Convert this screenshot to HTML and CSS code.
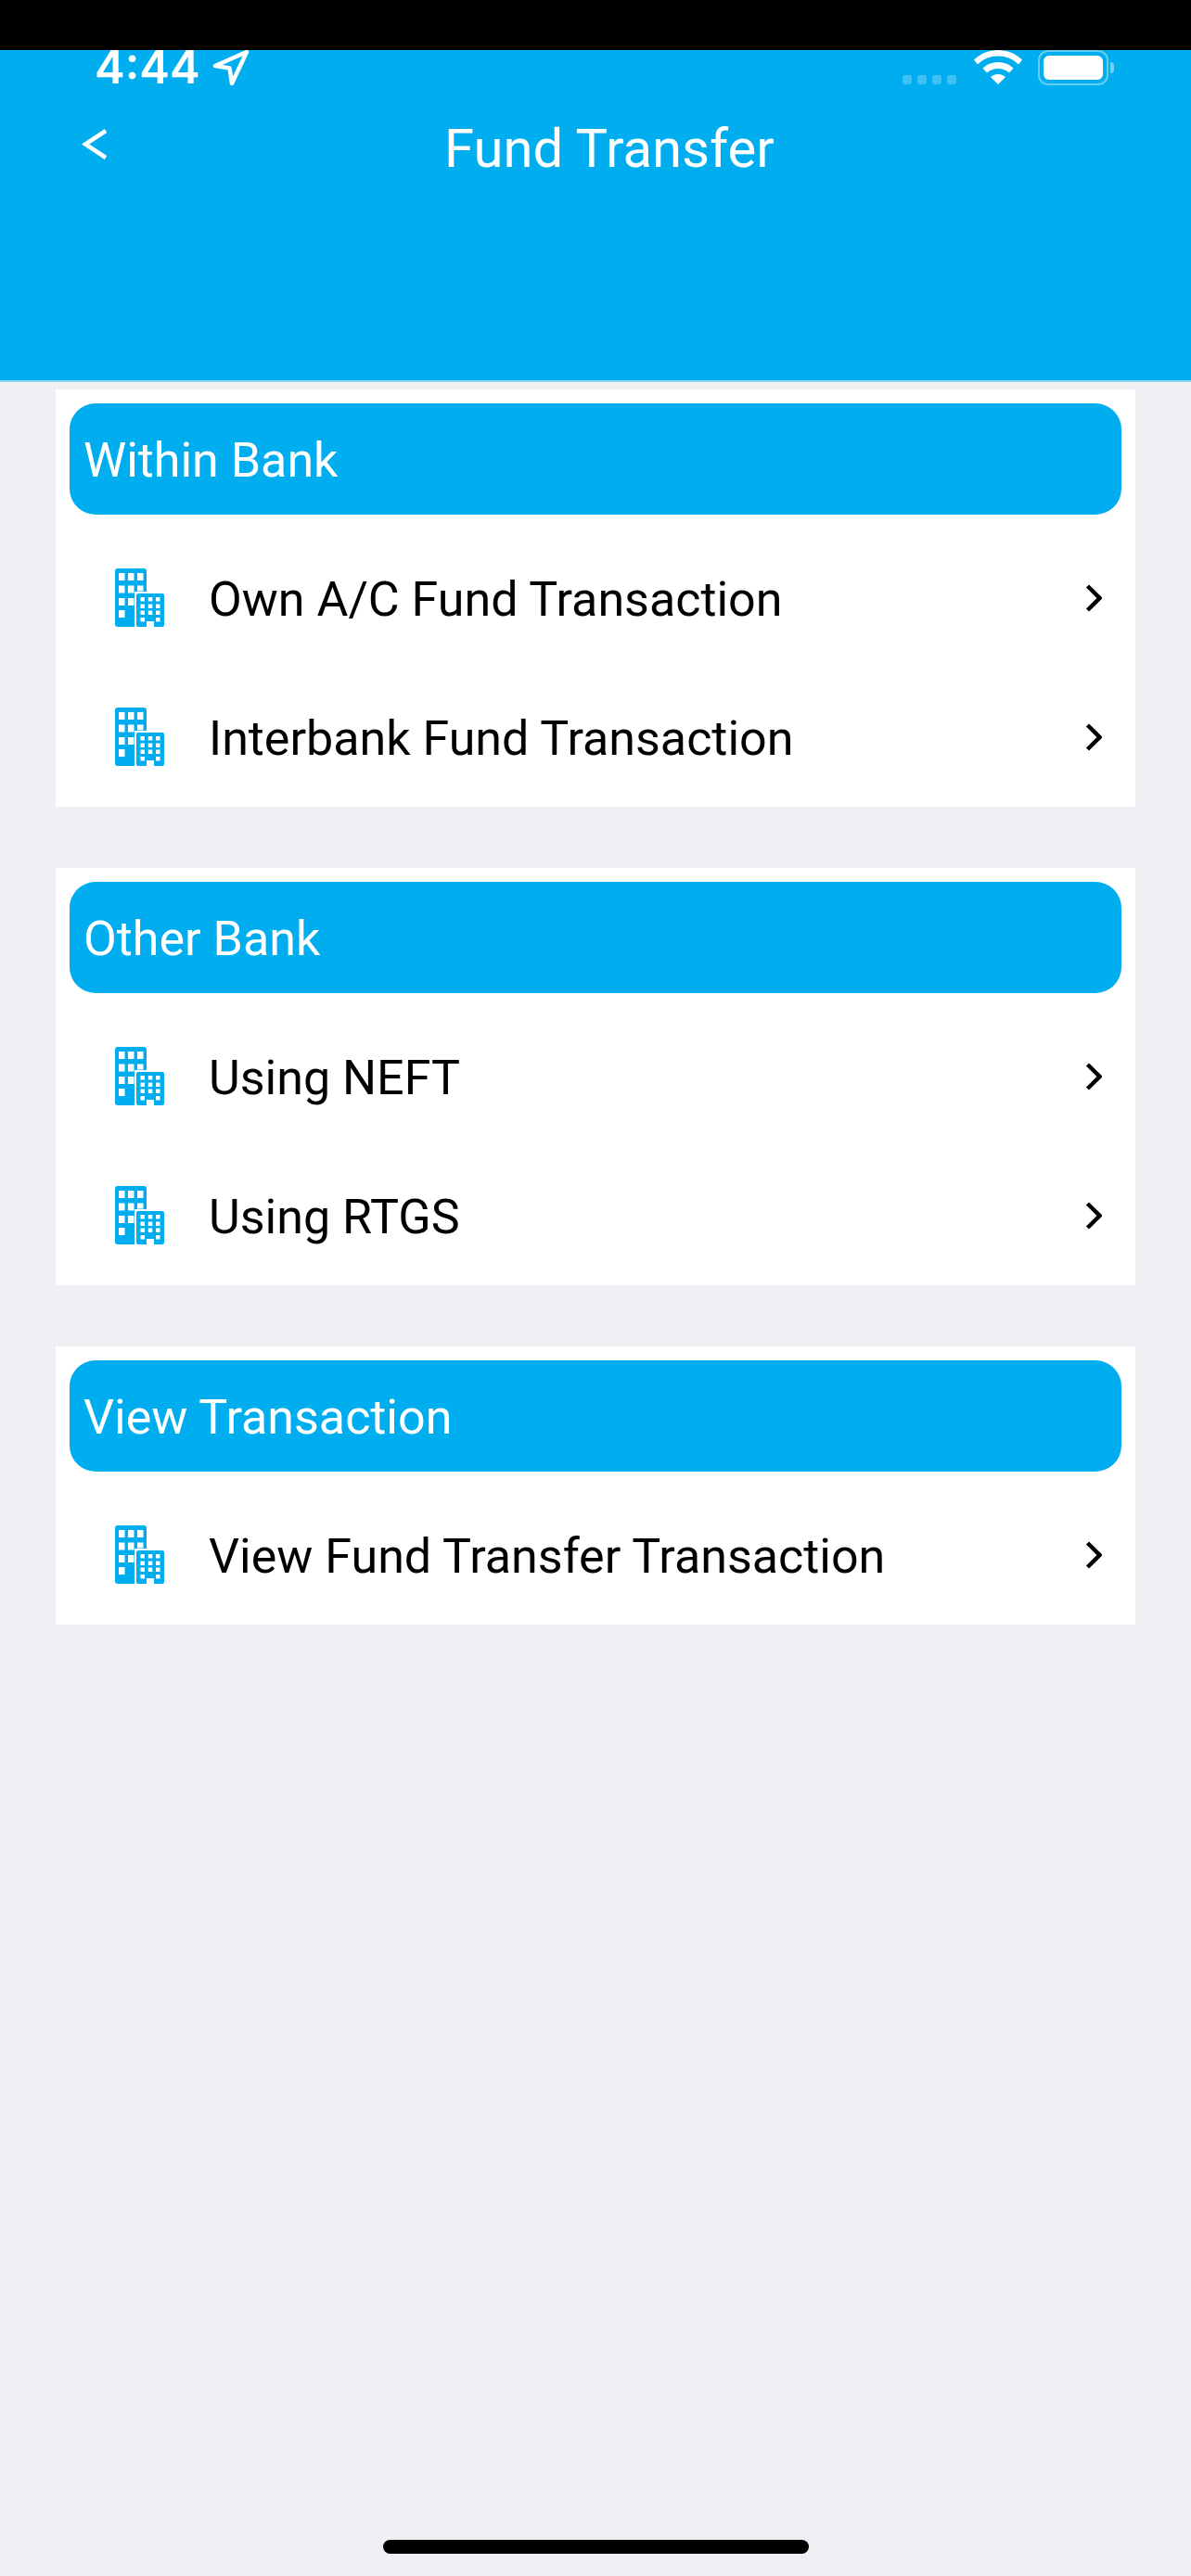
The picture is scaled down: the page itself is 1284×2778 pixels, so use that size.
FILE: index.html
```html
<!DOCTYPE html>
<html lang="en">
<head>
  <meta charset="UTF-8" />
  <meta name="viewport" content="width=device-width, initial-scale=1" />
  <title>Fund Transfer</title>
  <link rel="stylesheet" href="styles.css">
</head>
<body>

  <!-- Shared icons -->
  <svg class="icon-defs" aria-hidden="true">
    <symbol id="building" viewBox="0 0 54 64">
      <path fill="#00aeef" fill-rule="evenodd" d="M3 0h28a3 3 0 0 1 3 3v60H3a3 3 0 0 1-3-3V3a3 3 0 0 1 3-3z
        M4 5v8h6.500V5z M14 5v8h6.500V5z M24 5v8h6.500V5z
        M4 18.500v8h6.500v-8z M14 18.500v8h6.500v-8z M24 18.500v6h6.500v-6z
        M4 32v8h6.500v-8z M14 32v8h6.500v-8z
        M4 45v8h6.500v-8z"/>
      <rect x="21" y="25" width="33" height="39" fill="#fff"/>
      <path fill="#00aeef" fill-rule="evenodd" d="M25 27h26a2 2 0 0 1 2 2v32a2 2 0 0 1-2 2h-9v-6h-8v6h-9a2 2 0 0 1-2-2V29a2 2 0 0 1 2-2z
        M27.500 31v4.500h4.500V31z M35.800 31v4.500h4.500V31z M44 31v4.500h4.500V31z
        M27.500 38.500V43h4.500v-4.500z M35.800 38.500V43h4.500v-4.500z M44 38.500V43h4.500v-4.500z
        M27.500 45.500V50h4.500v-4.500z M35.800 45.500V50h4.500v-4.500z M44 45.500V50h4.500v-4.500z
        M27.500 53v4.500h4.500V53z M44 53v4.500h4.500V53z"/>
    </symbol>
    <symbol id="chevron" viewBox="0 0 19 32">
      <path d="M3.500 3L16.500 16L3.500 29" fill="none" stroke="#000" stroke-width="4.500"/>
    </symbol>
  </svg>

  <div class="notch-bar"></div>

  <header class="top">
    <div class="status">
      <span class="time">4:44</span>
      <svg class="loc" viewBox="0 0 40 38"><path d="M3 17L37 2L21 36L18.500 19.500z" fill="none" stroke="#fff" stroke-width="4.500" stroke-linejoin="round"/></svg>
      <div class="dots"><i></i><i></i><i></i><i></i></div>
      <svg class="wifi" viewBox="0 0 52 37">
        <path fill="#fff" d="M26 0C16 0 7.500 3.500 0 10.500L4 15.500C10 9.500 17.500 6.500 26 6.500S42 9.500 48 15.500L52 10.500C44.500 3.500 36 0 26 0z
          M26 13C20 13 14.500 15 9.500 19.500L14 24.500C17.500 21.500 21.500 20 26 20S34.500 21.500 38 24.500L42.500 19.500C37.500 15 32 13 26 13z
          M26 26C23 26 20.500 27 18 29L26 37L34 29C31.500 27 29 26 26 26z"/>
      </svg>
      <div class="battery"><div class="battery-fill"></div></div>
      <div class="battery-cap"></div>
    </div>
    <div class="nav">
      <svg class="back" viewBox="0 0 28 33"><path d="M26 2L4 16.500L26 31" fill="none" stroke="#fff" stroke-width="4.500"/></svg>
      <h1>Fund Transfer</h1>
    </div>
  </header>

  <main class="content">
    <section class="card">
      <h2>Within Bank</h2>
      <a class="row">
        <svg class="building"><use href="#building"/></svg>
        <span>Own A/C Fund Transaction</span>
        <svg class="chev"><use href="#chevron"/></svg>
      </a>
      <a class="row">
        <svg class="building"><use href="#building"/></svg>
        <span>Interbank Fund Transaction</span>
        <svg class="chev"><use href="#chevron"/></svg>
      </a>
    </section>

    <section class="card">
      <h2>Other Bank</h2>
      <a class="row">
        <svg class="building"><use href="#building"/></svg>
        <span>Using NEFT</span>
        <svg class="chev"><use href="#chevron"/></svg>
      </a>
      <a class="row">
        <svg class="building"><use href="#building"/></svg>
        <span>Using RTGS</span>
        <svg class="chev"><use href="#chevron"/></svg>
      </a>
    </section>

    <section class="card">
      <h2>View Transaction</h2>
      <a class="row">
        <svg class="building"><use href="#building"/></svg>
        <span>View Fund Transfer Transaction</span>
        <svg class="chev"><use href="#chevron"/></svg>
      </a>
    </section>
  </main>

  <div class="home-bar"></div>

</body>
</html>
```

FILE: styles.css
```css
html, body {
  height: 100%;
}

body {
  margin: 0;
  height: 2778px;
  display: flex;
  flex-direction: column;
  background-color: #efeff4;
  font-family: Roboto, "Liberation Sans", sans-serif;
  overflow: hidden;
}

.icon-defs {
  width: 0;
  height: 0;
  position: absolute;
}

.notch-bar {
  height: 54px;
  background-color: #000;
  flex: none;
}

.top {
  height: 356px;
  flex: none;
  background-color: #00aeef;
  border-bottom: 2px solid #8fd8f5;
  color: #fff;
}

/* status bar */
.status {
  display: flex;
  align-items: flex-start;
  height: 38px;
  padding-left: 102px;
}

.time {
  font-family: Inter, Roboto, sans-serif;
  font-size: 49px;
  font-weight: 600;
  line-height: 38px;
  letter-spacing: 0;
}

.loc {
  width: 40px;
  height: 38px;
  margin-left: 13px;
}

.dots {
  display: flex;
  gap: 6px;
  margin: 27px 0 0 704px;
}

.dots i {
  width: 10px;
  height: 10px;
  border-radius: 3px;
  background-color: rgba(255, 255, 255, 0.25);
}

.wifi {
  width: 52px;
  height: 37px;
  margin-left: 19px;
}

.battery {
  box-sizing: border-box;
  width: 76px;
  height: 38px;
  margin-left: 17px;
  padding: 4px;
  border: 2px solid rgba(255, 255, 255, 0.4);
  border-radius: 11px;
}

.battery-fill {
  height: 100%;
  background-color: #fff;
  border-radius: 6px;
}

.battery-cap {
  width: 4px;
  height: 12px;
  margin: 13px 0 0 2px;
  background-color: rgba(255, 255, 255, 0.45);
  border-radius: 0 6px 6px 0;
}

/* nav bar */
.nav {
  display: flex;
  align-items: center;
  height: 60px;
  margin-top: 38px;
  padding-left: 88px;
}

.back {
  width: 28px;
  height: 33px;
  margin-top: -10px;
}

.nav h1 {
  margin: 0 0 0 363px;
  font-size: 58px;
  font-weight: 400;
  line-height: 60px;
}

/* cards */
.content {
  padding: 8px 60px 0;
  display: flex;
  flex-direction: column;
  gap: 66px;
}

.card {
  background-color: #fff;
  padding: 15px;
}

.card h2 {
  margin: 0 0 15px 0;
  height: 120px;
  padding-left: 15px;
  background-color: #00aeef;
  border-radius: 28px;
  color: #fff;
  font-size: 52px;
  font-weight: 400;
  line-height: 124px;
}

.row {
  display: flex;
  align-items: center;
  height: 150px;
  margin: 0 -15px;
  padding: 0 36px 0 64px;
}

.row:last-child {
  margin-bottom: -15px;
}

.building {
  width: 54px;
  height: 64px;
  flex: none;
}

.row span {
  flex: 1;
  margin: 2px 0 0 47px;
  color: #000;
  font-size: 52px;
}

.chev {
  width: 19px;
  height: 32px;
  flex: none;
}

.home-bar {
  width: 459px;
  height: 15px;
  margin: auto auto 24px;
  background-color: #000;
  border-radius: 8px;
  flex: none;
}
```
